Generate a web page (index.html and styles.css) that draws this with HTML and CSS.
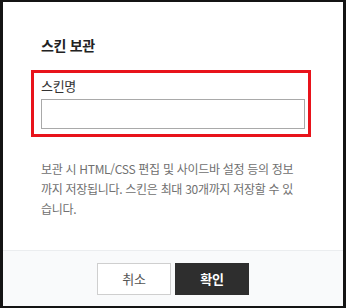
FILE: index.html
```html
<!DOCTYPE html>
<html lang="ko">
<head>
<meta charset="utf-8">
<link rel="stylesheet" href="styles.css">
</head>
<body>
<div class="frame">
  <div class="content">
    <h2 class="title">스킨 보관</h2>
    <div class="field highlight">
      <label class="label" for="skin-name">스킨명</label>
      <input class="input" id="skin-name" type="text">
    </div>
    <p class="desc">보관 시 HTML/CSS 편집 및 사이드바 설정 등의 정보까지 저장됩니다. 스킨은 최대 30개까지 저장할 수 있습니다.</p>
  </div>
  <div class="footer">
    <button class="btn btn-cancel" type="button">취소</button>
    <button class="btn btn-ok" type="button">확인</button>
  </div>
</div>
</body>
</html>
```
FILE: styles.css
```css
* { box-sizing: border-box; }
html, body {
  margin: 0;
  padding: 0;
  background: #fff;
}
body {
  font-family: "Noto Sans CJK KR", "Noto Sans", sans-serif;
  color: #222;
}
.frame {
  width: 346px;
  height: 308px;
  border-style: solid;
  border-color: #141414;
  border-width: 2px 3px 2px 3px;
  display: flex;
  flex-direction: column;
  background: #fff;
}
.content {
  flex: 1;
  padding: 33px 38px 0 38px;
}
.title {
  margin: 0 0 15px 0;
  font-size: 14px;
  line-height: 20px;
  font-weight: 700;
  color: #222;
  letter-spacing: -0.3px;
}
.highlight {
  border: 3px solid #e8131b;
  margin: 0 -6px 0 -10px;
  padding: 4px 3px 5px 7px;
}
.field {
  display: flex;
  flex-direction: column;
}
.label {
  font-size: 13px;
  line-height: 17px;
  color: #333;
  margin-bottom: 5px;
  letter-spacing: -0.3px;
}
.input {
  height: 30px;
  border: 1px solid #a9a9a9;
  padding: 0 8px;
  font: inherit;
  outline: none;
  background: #fff;
}
.desc {
  margin: 22px 8px 0 0;
  font-size: 12px;
  line-height: 20px;
  color: #707070;
  letter-spacing: -0.3px;
}
.footer {
  height: 56px;
  border-top: 1px solid #ebedef;
  background: #f9fafb;
  display: flex;
  justify-content: center;
  align-items: center;
  gap: 4px;
}
.btn {
  width: 74px;
  height: 32px;
  font-family: inherit;
  font-size: 13px;
  letter-spacing: -0.3px;
  cursor: pointer;
}
.btn-cancel {
  background: #fff;
  border: 1px solid #cfcfcf;
  color: #555;
}
.btn-ok {
  background: #2e2e2e;
  border: 1px solid #2e2e2e;
  color: #fff;
  font-weight: 700;
}
```
